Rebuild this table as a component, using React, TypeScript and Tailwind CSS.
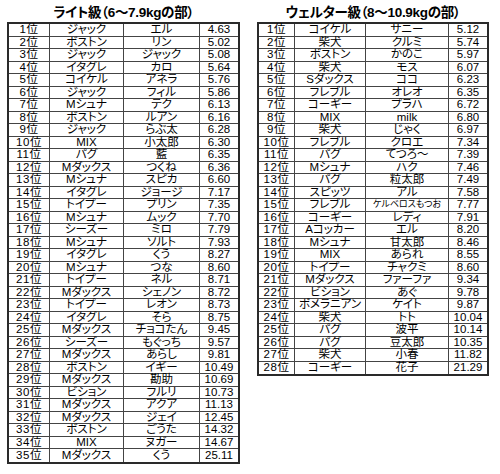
import React from "react";

type Row = [string, string, string, string];

const light: Row[] = [
  ["1位", "ジャック", "エル", "4.63"],
  ["2位", "ボストン", "リン", "5.02"],
  ["3位", "ジャック", "ジャック", "5.08"],
  ["4位", "イタグレ", "カロ", "5.64"],
  ["5位", "コイケル", "アネラ", "5.76"],
  ["6位", "ジャック", "フィル", "5.86"],
  ["7位", "Mシュナ", "テク", "6.13"],
  ["8位", "ボストン", "ルアン", "6.16"],
  ["9位", "ジャック", "らぶ太", "6.28"],
  ["10位", "MIX", "小太郎", "6.30"],
  ["11位", "パグ", "藍", "6.35"],
  ["12位", "Mダックス", "つくね", "6.36"],
  ["13位", "Mシュナ", "スピカ", "6.60"],
  ["14位", "イタグレ", "ジョージ", "7.17"],
  ["15位", "トイプー", "プリン", "7.35"],
  ["16位", "Mシュナ", "ムック", "7.70"],
  ["17位", "シーズー", "ミロ", "7.79"],
  ["18位", "Mシュナ", "ソルト", "7.93"],
  ["19位", "イタグレ", "くう", "8.27"],
  ["20位", "Mシュナ", "つな", "8.60"],
  ["21位", "トイプー", "ネル", "8.71"],
  ["22位", "Mダックス", "シェノン", "8.72"],
  ["23位", "トイプー", "レオン", "8.73"],
  ["24位", "イタグレ", "そら", "8.75"],
  ["25位", "Mダックス", "チョコたん", "9.45"],
  ["26位", "シーズー", "もぐっち", "9.57"],
  ["27位", "Mダックス", "あらし", "9.81"],
  ["28位", "ボストン", "イギー", "10.49"],
  ["29位", "Mダックス", "勘助", "10.69"],
  ["30位", "ビション", "フルリ", "10.73"],
  ["31位", "Mダックス", "アクア", "11.13"],
  ["32位", "Mダックス", "ジェイ", "12.45"],
  ["33位", "ボストン", "ごうた", "14.32"],
  ["34位", "MIX", "ヌガー", "14.67"],
  ["35位", "Mダックス", "くう", "25.11"],
];

const welter: Row[] = [
  ["1位", "コイケル", "サニー", "5.12"],
  ["2位", "柴犬", "クルミ", "5.74"],
  ["3位", "ボストン", "かのこ", "5.97"],
  ["4位", "柴犬", "モス", "6.07"],
  ["5位", "Sダックス", "ココ", "6.23"],
  ["6位", "フレブル", "オレオ", "6.35"],
  ["7位", "コーギー", "プラハ", "6.72"],
  ["8位", "MIX", "milk", "6.80"],
  ["9位", "柴犬", "じゃく", "6.97"],
  ["10位", "フレブル", "クロエ", "7.34"],
  ["11位", "パグ", "てつろ～", "7.39"],
  ["12位", "Mシュナ", "ハク", "7.46"],
  ["13位", "パグ", "粒太郎", "7.49"],
  ["14位", "スピッツ", "アル", "7.58"],
  ["15位", "フレブル", "ケルベロスもつお", "7.77"],
  ["16位", "コーギー", "レディ", "7.91"],
  ["17位", "Aコッカー", "エル", "8.20"],
  ["18位", "Mシュナ", "甘太郎", "8.46"],
  ["19位", "MIX", "あられ", "8.55"],
  ["20位", "トイプー", "チャクミ", "8.60"],
  ["21位", "Mダックス", "ファーファ", "9.34"],
  ["22位", "ビション", "あぐ", "9.78"],
  ["23位", "ポメラニアン", "ケイト", "9.87"],
  ["24位", "柴犬", "トト", "10.04"],
  ["25位", "パグ", "波平", "10.14"],
  ["26位", "パグ", "豆太郎", "10.35"],
  ["27位", "柴犬", "小春", "11.82"],
  ["28位", "コーギー", "花子", "21.29"],
];

function Table({
  title,
  rows,
  widths,
  tableWidth,
}: {
  title: string;
  rows: Row[];
  widths: [string, string, string];
  tableWidth: string;
}) {
  return (
    <div className={`flex flex-col ${tableWidth}`}>
      <div className="h-[22px] flex items-end justify-center pb-[1px]">
        <span className="text-[13.5px] font-bold leading-[16px] text-black tracking-[-0.3px] [font-feature-settings:'palt']">
          {title}
        </span>
      </div>
      <div className="border-2 border-[#2a2a2a] flex flex-col">
        {rows.map((r, i) => (
          <div
            key={i}
            className={`flex h-[12.5px] ${i < rows.length - 1 ? "border-b border-[#444]" : ""}`}
          >
            <div className={`${widths[0]} shrink-0 border-r border-[#444] flex items-center justify-center tracking-[0.6px]`}>
              {r[0]}
            </div>
            <div className={`${widths[1]} shrink-0 border-r border-[#444] flex items-center justify-center`}>
              {r[1]}
            </div>
            <div
              className={`${widths[2]} shrink-0 border-r border-[#444] flex items-center justify-center whitespace-nowrap ${
                r[2].length > 6 ? "text-[9px]" : ""
              }`}
            >
              {r[2]}
            </div>
            <div className="flex-1 flex items-center justify-center">{r[3]}</div>
          </div>
        ))}
      </div>
    </div>
  );
}

export default function App() {
  return (
    <div
      className="w-[500px] h-[474px] bg-white text-black flex items-start pl-[7px] gap-[17px] text-[11.5px] leading-none [font-feature-settings:'palt']"
      style={{ fontFamily: '"Liberation Sans", "Noto Sans CJK JP", sans-serif' }}
    >
      <Table
        title="ライト級（6～7.9kgの部）"
        rows={light}
        widths={["w-[41px]", "w-[74px]", "w-[76px]"]}
        tableWidth="w-[233px]"
      />
      <Table
        title="ウェルター級（8～10.9kgの部）"
        rows={welter}
        widths={["w-[36px]", "w-[71px]", "w-[83px]"]}
        tableWidth="w-[232px]"
      />
    </div>
  );
}
